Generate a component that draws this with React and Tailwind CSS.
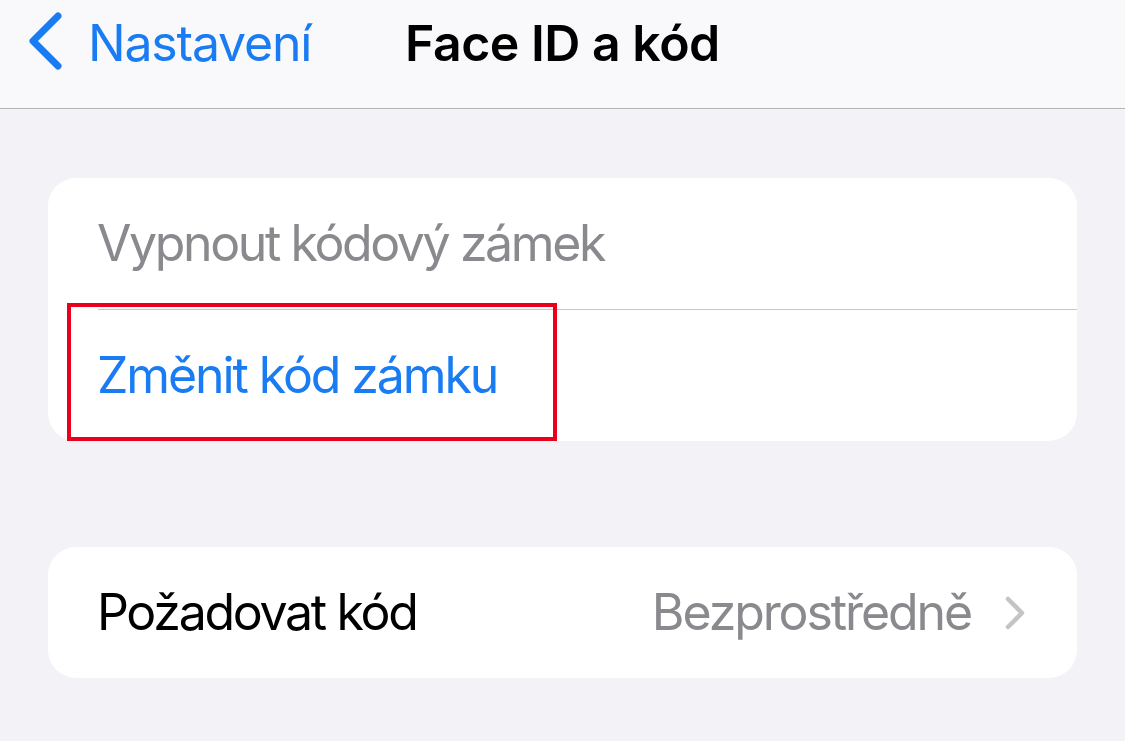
import React from "react";

const App = () => {
  return (
    <div className="w-[1125px] h-[741px] bg-[#f2f2f7] overflow-hidden font-['Inter','Noto_Sans',sans-serif]">
      {/* Nav bar */}
      <header className="h-[109px] bg-[#f9f9fb] border-b border-[#b5b5b8] flex items-start pt-[10px]">
        <div className="flex items-center h-[66px] pl-[27px] w-[398px]">
          <svg width="36" height="58" viewBox="0 0 36 58" className="shrink-0 -mt-[4px]">
            <path
              d="M31 4 L6 29 L31 54"
              fill="none"
              stroke="#1a7cf2"
              strokeWidth="7"
              strokeLinecap="round"
              strokeLinejoin="round"
            />
          </svg>
          <span className="ml-[25px] text-[50px] leading-none text-[#1a7cf2] tracking-[-1.2px]">
            Nastavení
          </span>
        </div>
        <div className="flex items-center h-[66px] ml-[7px]">
          <span className="text-[50px] leading-none font-semibold text-black tracking-[-0.5px]">
            Face ID a kód
          </span>
        </div>
      </header>

      {/* First group */}
      <section className="px-[48px] mt-[69px]">
        <div className="relative bg-white rounded-[28px]">
          <div className="h-[131px] flex items-center pl-[49px] text-[50px] text-[#8a8a8e] tracking-[-2.4px]">
            Vypnout kódový zámek
          </div>
          <div className="ml-[50px] h-px bg-[#c8c8cc]" />
          <div className="h-[131px] flex items-center pl-[49px] text-[50px] text-[#1a7cf2] tracking-[-2.1px]">
            Změnit kód zámku
          </div>
          <div className="absolute left-[19px] top-[125px] w-[490px] h-[138px] border-[4px] border-[#e8001c]" />
        </div>
      </section>

      {/* Second group */}
      <section className="px-[48px] mt-[106px]">
        <div className="bg-white rounded-[28px] h-[131px] flex items-center justify-between pl-[49px] pr-[52px]">
          <span className="text-[50px] text-black tracking-[-2.3px]">Požadovat kód</span>
          <div className="flex items-center gap-[34px]">
            <span className="text-[50px] text-[#8a8a8e] tracking-[-2.1px]">Bezprostředně</span>
            <svg width="20" height="34" viewBox="0 0 20 34">
              <path
                d="M3 3 L17 17 L3 31"
                fill="none"
                stroke="#c4c4c7"
                strokeWidth="4.5"
                strokeLinecap="round"
                strokeLinejoin="round"
              />
            </svg>
          </div>
        </div>
      </section>
    </div>
  );
};

export default App;
